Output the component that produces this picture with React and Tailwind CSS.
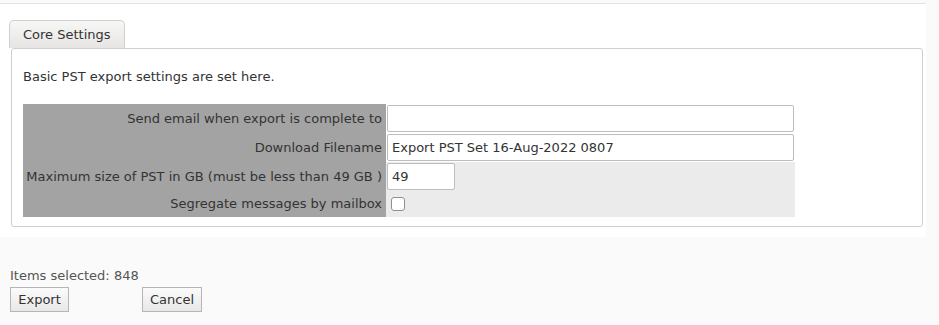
export default function App() {
  const font = { fontFamily: '"DejaVu Sans", Verdana, sans-serif' };
  return (
    <div className="w-[939px] h-[325px] bg-[#fafafa] text-[#333] text-[13px] overflow-hidden" style={font}>
      <div className="h-[3px]" />
      <div className="w-[926px] border-t border-[#e2e2e2] bg-white pt-4 pb-2.5 pl-[9px] pr-[3px]">
        <div className="flex">
          <div className="h-[28px] px-[13px] flex items-center rounded-t-[5px] border border-b-0 border-[#cfcfcf] bg-gradient-to-b from-[#f7f7f6] to-[#e6e5e3] text-[13px] text-[#333]">
            Core Settings
          </div>
        </div>
        <div className="ml-[2px] border border-[#cfcfcf] rounded-[3px] bg-white pt-[21px] pb-[9px] pl-[11px] pr-[11px]">
          <div className="h-[14px] leading-[14px] text-[13px] mb-[20px]">Basic PST export settings are set here.</div>
          <div className="w-[773px]">
            <div className="grid grid-cols-[363px_409px]">
              <div className="bg-[#a3a3a3] h-[29px] flex items-center justify-end pr-[4px] whitespace-nowrap">Send email when export is complete to</div>
              <div className="bg-white h-[29px] flex items-center pl-[1px]">
                <input className="w-[407px] h-[27px] border border-[#bdbdbd] rounded-[2px] bg-white px-[4px] outline-none" defaultValue="" style={font} />
              </div>
              <div className="bg-[#a3a3a3] h-[29px] flex items-center justify-end pr-[4px] whitespace-nowrap">Download Filename</div>
              <div className="bg-white h-[29px] flex items-center pl-[1px]">
                <input className="w-[407px] h-[27px] border border-[#bdbdbd] rounded-[2px] bg-white px-[4px] text-[13px] text-[#333] outline-none" defaultValue="Export PST Set 16-Aug-2022 0807" style={font} />
              </div>
              <div className="bg-[#a3a3a3] h-[29px] flex items-center justify-end pr-[4px] whitespace-nowrap">Maximum size of PST in GB (must be less than 49 GB )</div>
              <div className="bg-[#ebebeb] h-[29px] flex items-center pl-[1px]">
                <input className="w-[68px] h-[27px] border border-[#bdbdbd] rounded-[2px] bg-white px-[4px] text-[13px] text-[#333] outline-none" defaultValue="49" style={font} />
              </div>
              <div className="bg-[#a3a3a3] h-[26px] flex items-center justify-end pr-[4px] whitespace-nowrap">Segregate messages by mailbox</div>
              <div className="bg-[#ebebeb] h-[26px] flex items-center pl-[5px]">
                <span className="block w-[14px] h-[14px] border border-[#8f8f8f] rounded-[3px] bg-white" />
              </div>
            </div>
          </div>
        </div>
      </div>
      <div className="pl-[10px] pt-[31px]">
        <div className="text-[13px] leading-[16px] text-[#555]">Items selected: 848</div>
        <div className="flex mt-[3px]">
          <button className="w-[59px] h-[25px] border border-[#b5b5b5] bg-gradient-to-b from-[#fbfbfb] to-[#e8e8e8] text-[13px] text-[#333]" style={font}>Export</button>
          <button className="ml-[73px] w-[60px] h-[25px] border border-[#b5b5b5] bg-gradient-to-b from-[#fbfbfb] to-[#e8e8e8] text-[13px] text-[#333]" style={font}>Cancel</button>
        </div>
      </div>
    </div>
  );
}
